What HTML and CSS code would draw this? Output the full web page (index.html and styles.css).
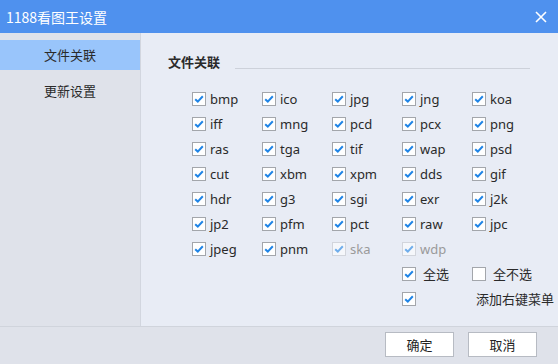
FILE: index.html
```html
<!DOCTYPE html>
<html lang="zh-CN">
<head>
  <meta charset="UTF-8">
  <title>1188看图王设置</title>
  <link rel="stylesheet" href="styles.css">
</head>
<body>
  <div class="dialog">
    <div class="titlebar">
      <span class="title">1188看图王设置</span>
      <svg class="close" width="12" height="12" viewBox="0 0 12 12"><path d="M1 1L11 11M11 1L1 11" stroke="#fff" stroke-width="1.6" fill="none"/></svg>
    </div>
    <div class="main">
      <ul class="side">
        <li class="on">文件关联</li>
        <li>更新设置</li>
      </ul>
      <div class="content">
        <div class="head">
          <h3>文件关联</h3>
          <span class="rule"></span>
        </div>
        <div class="grid">
          <label class="item"><i class="box ck"></i>bmp</label>
          <label class="item"><i class="box ck"></i>ico</label>
          <label class="item"><i class="box ck"></i>jpg</label>
          <label class="item"><i class="box ck"></i>jng</label>
          <label class="item"><i class="box ck"></i>koa</label>

          <label class="item"><i class="box ck"></i>iff</label>
          <label class="item"><i class="box ck"></i>mng</label>
          <label class="item"><i class="box ck"></i>pcd</label>
          <label class="item"><i class="box ck"></i>pcx</label>
          <label class="item"><i class="box ck"></i>png</label>

          <label class="item"><i class="box ck"></i>ras</label>
          <label class="item"><i class="box ck"></i>tga</label>
          <label class="item"><i class="box ck"></i>tif</label>
          <label class="item"><i class="box ck"></i>wap</label>
          <label class="item"><i class="box ck"></i>psd</label>

          <label class="item"><i class="box ck"></i>cut</label>
          <label class="item"><i class="box ck"></i>xbm</label>
          <label class="item"><i class="box ck"></i>xpm</label>
          <label class="item"><i class="box ck"></i>dds</label>
          <label class="item"><i class="box ck"></i>gif</label>

          <label class="item"><i class="box ck"></i>hdr</label>
          <label class="item"><i class="box ck"></i>g3</label>
          <label class="item"><i class="box ck"></i>sgi</label>
          <label class="item"><i class="box ck"></i>exr</label>
          <label class="item"><i class="box ck"></i>j2k</label>

          <label class="item"><i class="box ck"></i>jp2</label>
          <label class="item"><i class="box ck"></i>pfm</label>
          <label class="item"><i class="box ck"></i>pct</label>
          <label class="item"><i class="box ck"></i>raw</label>
          <label class="item"><i class="box ck"></i>jpc</label>

          <label class="item"><i class="box ck"></i>jpeg</label>
          <label class="item"><i class="box ck"></i>pnm</label>
          <label class="item off"><i class="box ck"></i>ska</label>
          <label class="item off"><i class="box ck"></i>wdp</label>
          <span></span>

          <label class="item cn c4"><i class="box ck"></i>全选</label>
          <label class="item cn"><i class="box"></i>全不选</label>

          <label class="item c4"><i class="box ck"></i></label>
          <span class="item menu">添加右键菜单</span>
        </div>
      </div>
    </div>
    <div class="footer">
      <button class="btn">确定</button>
      <button class="btn">取消</button>
    </div>
  </div>
</body>
</html>
```

FILE: styles.css
```css
*{
  margin: 0;
  padding: 0;
  box-sizing: border-box;
}
body{
  width: 558px;
  height: 364px;
  overflow: hidden;
  font-family: "Noto Sans", "Noto Sans CJK SC", sans-serif;
  font-size: 13px;
  color: #2a2a2a;
}
ul{
  list-style: none;
}

/* title */
.titlebar{
  height: 33px;
  background: #4f91ee;
  display: flex;
  align-items: center;
  justify-content: space-between;
  padding: 0 11px 0 6px;
}
.title{
  color: #fff;
  font-family: "Noto Sans CJK SC", sans-serif;
  font-size: 14px;
}

/* main */
.main{
  display: flex;
  height: 293px;
}
.side{
  flex: none;
  width: 141px;
  background: #dfe2ea;
  border-right: 1px solid #d2d6df;
  padding-top: 7px;
}
.side li{
  height: 30px;
  line-height: 30px;
  text-align: center;
  font-family: "Noto Sans CJK SC", sans-serif;
  margin-bottom: 6px;
}
.side li.on{
  background: #99c5fb;
}
.content{
  flex: 1;
  min-width: 0;
  background: #e8ecf5;
  padding: 20px 28px 0 27px;
}
.head{
  display: flex;
  align-items: flex-end;
  height: 18px;
}
.head h3{
  font-family: "Noto Sans CJK SC", sans-serif;
  font-size: 13px;
  font-weight: bold;
  line-height: 18px;
}
.rule{
  flex: 1;
  margin: 0 0 2px 15px;
  border-top: 1px solid #cdd1da;
}

/* checkbox grid */
.grid{
  margin: 15px 0 0 24px;
  display: grid;
  grid-template-columns: repeat(5, 70px);
  grid-auto-rows: 25px;
}
.item{
  display: flex;
  align-items: center;
  gap: 4px;
}
.item.cn{
  gap: 7px;
  font-family: "Noto Sans CJK SC", sans-serif;
}
.c4{
  grid-column: 4;
}
.box{
  width: 14px;
  height: 14px;
  background: #fff;
  border: 1px solid #a3a6ab;
  flex: none;
}
.box.ck{
  background: #fff url("data:image/svg+xml;utf8,<svg xmlns='http://www.w3.org/2000/svg' width='12' height='12' viewBox='0 0 12 12'><path d='M2.2 6.2L4.8 8.6L9.8 3.2' stroke='%231f84e6' stroke-width='2' fill='none'/></svg>") center no-repeat;
}
.off{
  color: #9a9a9a;
}
.off .box{
  border-color: #c4c7cc;
  opacity: 0.6;
}
.menu{
  font-family: "Noto Sans CJK SC", sans-serif;
  padding-left: 4px;
  white-space: nowrap;
}

/* footer */
.footer{
  height: 38px;
  background: #dfe2ea;
  border-top: 1px solid #d0d4dc;
  display: flex;
  justify-content: flex-end;
  gap: 14px;
  padding: 5px 21px 0 0;
}
.btn{
  width: 69px;
  height: 25px;
  background: #fff;
  border: 1px solid #b7bbc3;
  font-family: "Noto Sans CJK SC", sans-serif;
  font-size: 13px;
  color: #222;
}
```
